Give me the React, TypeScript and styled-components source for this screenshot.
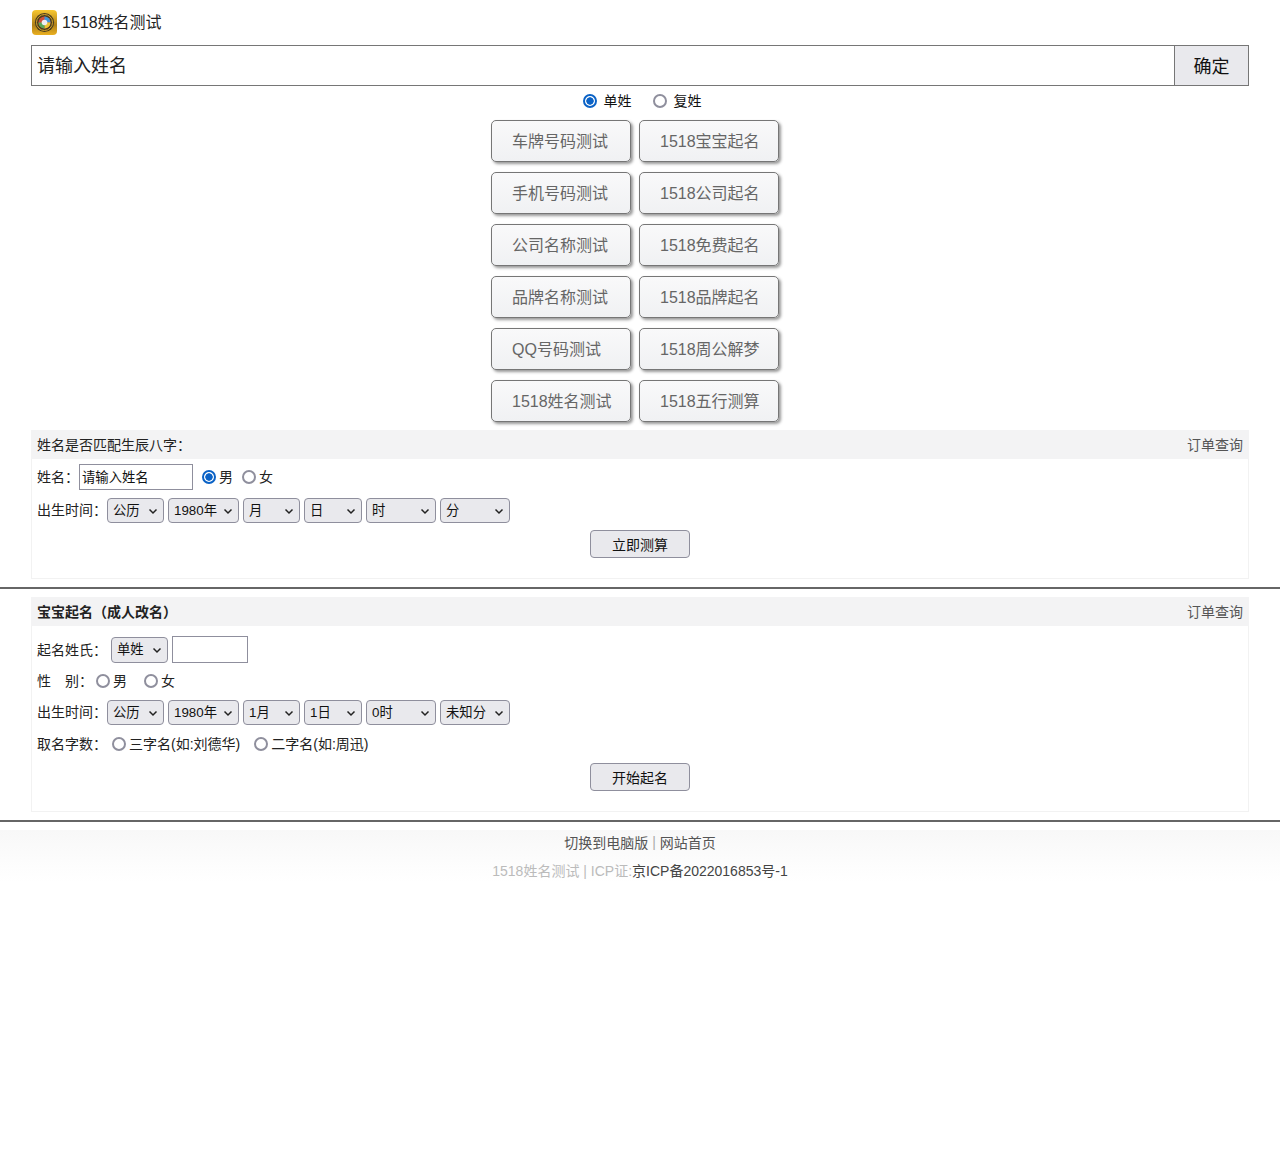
import React from "react";
import styled, { createGlobalStyle } from "styled-components";

const FONT = `"Liberation Sans", "Noto Sans CJK SC", sans-serif`;

const Global = createGlobalStyle`
  html, body { margin: 0; padding: 0; background: #fff; }
  body { font-family: ${FONT}; font-size: 14px; color: #111; }
  * { box-sizing: border-box; }
`;

const Page = styled.div`
  width: 1280px;
  min-height: 1167px;
  background: #fff;
`;
const Band = styled.div`
  padding: 0 31px;
`;
const Brand = styled.div`
  display: flex;
  align-items: center;
  gap: 5px;
  height: 45px;
  padding: 0 0 0 1px;
  font-size: 16px;
  color: #222;
`;
const BrandName = styled.span`
  padding-bottom: 4px;
`;
const SearchRow = styled.div`
  display: flex;
  height: 41px;
`;
const SearchInput = styled.input`
  flex: 1;
  min-width: 0;
  height: 41px;
  border: 1px solid #767676;
  border-right: 0;
  padding: 2px 5px 0 5px;
  font: 18px ${FONT};
  color: #222;
  outline: 0;
  &::placeholder { color: #222; opacity: 1; }
`;
const SearchButton = styled.button`
  width: 75px;
  height: 41px;
  border: 1px solid #767676;
  background: #e9e9ed;
  padding: 0 0 2px;
  font: 18px ${FONT};
  color: #111;
`;
const SurnameRow = styled.div`
  display: flex;
  justify-content: center;
  align-items: center;
  height: 29px;
  padding-left: 4px;
  font-size: 14px;
  color: #111;
  gap: 21px;
`;
const Option = styled.label<{ $gap?: number }>`
  display: inline-flex;
  align-items: center;
  gap: ${(p) => p.$gap ?? 3}px;
  padding-bottom: 2px;
`;
const Radio = styled.input.attrs({ type: "radio" })`
  appearance: none;
  width: 14px;
  height: 14px;
  margin: 2px 0 0;
  border-radius: 50%;
  border: 2px solid #8f8f9d;
  background: #fff;
  &:checked {
    border: 2px solid #0a62c6;
    background: radial-gradient(circle, #0a62c6 0 3.4px, #fff 4px);
  }
`;
const Grid = styled.div`
  display: grid;
  grid-template-columns: 140px 140px;
  gap: 10px 8px;
  justify-content: center;
  margin: 5px 0 8px;
  padding-right: 10px;
`;
const LinkButton = styled.button`
  height: 42px;
  width: 140px;
  border: 1px solid #767676;
  border-radius: 5px;
  background: linear-gradient(#f9f9fa, #f0f1f3);
  box-shadow: 2px 2px 3px #999;
  padding: 0 0 2px 20px;
  text-align: left;
  font: 16px ${FONT};
  color: #666;
`;
const Card = styled.section<{ $height: number }>`
  height: ${(p) => p.$height}px;
  border: 1px solid #f2f2f2;
  border-top: 0;
  display: flex;
  flex-direction: column;
`;
const CardTitle = styled.div<{ $bold?: boolean }>`
  display: flex;
  justify-content: space-between;
  align-items: center;
  height: 29px;
  background: #f3f3f4;
  margin: 0 -1px;
  padding: 0 6px 2px;
  font-size: 14px;
  font-weight: ${(p) => (p.$bold ? 700 : 400)};
  color: #222;
`;
const OrderLink = styled.span`
  font-weight: 400;
  color: #555;
`;
const Row = styled.div<{ $h: number }>`
  display: flex;
  align-items: center;
  height: ${(p) => p.$h}px;
  padding-left: 5px;
  gap: 4px;
  color: #222;
`;
const Options = styled.div<{ $gap: number; $left?: number }>`
  display: flex;
  align-items: center;
  gap: ${(p) => p.$gap}px;
  margin-left: ${(p) => p.$left ?? 0}px;
`;
const Label = styled.span<{ $w: number; $lift?: number }>`
  width: ${(p) => p.$w}px;
  flex: none;
  white-space: pre;
  padding-bottom: ${(p) => p.$lift ?? 2}px;
`;
const TextBox = styled.input<{ $w: number; $h: number }>`
  width: ${(p) => p.$w}px;
  height: ${(p) => p.$h}px;
  flex: none;
  border: 1px solid #8f8f9d;
  padding: 0 2px 1px;
  font: 13.33px ${FONT};
  color: #111;
  outline: 0;
  &::placeholder { color: #111; opacity: 1; }
`;
const SelectWrap = styled.span<{ $w: number; $h: number }>`
  position: relative;
  display: inline-block;
  flex: none;
  width: ${(p) => p.$w}px;
  height: ${(p) => p.$h}px;
`;
const NativeSelect = styled.select`
  appearance: none;
  width: 100%;
  height: 100%;
  border: 1px solid #8f8f9d;
  border-radius: 4px;
  background: #e9e9ed;
  padding: 0 0 0 5px;
  font: 13.33px ${FONT};
  color: #111;
  outline: 0;
`;
const Chevron = styled.svg`
  position: absolute;
  right: 6px;
  top: calc(50% - 5px);
  width: 10px;
  height: 10px;
  pointer-events: none;
`;
const Center = styled.div<{ $top: number }>`
  display: flex;
  justify-content: center;
  margin-top: ${(p) => p.$top}px;
`;
const Submit = styled.button`
  width: 100px;
  height: 28px;
  border: 1px solid #8f8f9d;
  border-radius: 4px;
  background: #e9e9ed;
  padding: 0;
  font: 14px ${FONT};
  color: #111;
`;
const Rule = styled.hr`
  height: 2px;
  border: 0;
  margin: 8px 0;
  background: #666;
`;
const Footer = styled.footer`
  height: 52px;
  background: linear-gradient(#f8f8f8, #fff);
  display: flex;
  flex-direction: column;
  align-items: center;
  font-size: 14px;
`;
const FooterLine = styled.div<{ $h: number; $top?: number; $muted?: boolean }>`
  height: ${(p) => p.$h}px;
  padding-top: ${(p) => p.$top ?? 0}px;
  display: flex;
  align-items: center;
  color: ${(p) => (p.$muted ? "#bbb" : "#555")};
  white-space: pre;
`;
const Sep = styled.span`
  color: #aaa;
`;
const Dark = styled.span`
  color: #444;
`;

const Logo = () => (
  <svg width="25" height="25" viewBox="0 0 25 25" aria-hidden="true">
    <defs>
      <linearGradient id="lg" x1="0" y1="0" x2="0" y2="1">
        <stop offset="0" stopColor="#f8c830" />
        <stop offset="0.6" stopColor="#b08018" />
        <stop offset="1" stopColor="#eab020" />
      </linearGradient>
    </defs>
    <rect width="25" height="25" rx="4" fill="url(#lg)" />
    <circle cx="12.5" cy="12.5" r="9.6" fill="#4a3c1c" />
    <circle cx="12.5" cy="12.5" r="8" fill="none" stroke="#d9a52a" strokeWidth="1" />
    <circle cx="12.5" cy="12.5" r="6" fill="#d0503a" />
    <path d="M12.5 6.5a6 6 0 0 1 6 6h-6z" fill="#3f94d6" />
    <path d="M18.5 12.5a6 6 0 0 1-6 6v-6z" fill="#ecc533" />
    <path d="M12.5 18.5a6 6 0 0 1-6-6h6z" fill="#58a858" />
    <circle cx="12.5" cy="12.5" r="2.8" fill="#eeeef2" />
  </svg>
);

const Select = ({ w, h = 25, value }: { w: number; h?: number; value: string }) => (
  <SelectWrap $w={w} $h={h}>
    <NativeSelect defaultValue={value}>
      <option>{value}</option>
    </NativeSelect>
    <Chevron viewBox="0 0 10 10">
      <path d="M1.5 3.5 5 7 8.5 3.5" fill="none" stroke="#222" strokeWidth="1.5" />
    </Chevron>
  </SelectWrap>
);

const links = [
  ["车牌号码测试", "1518宝宝起名"],
  ["手机号码测试", "1518公司起名"],
  ["公司名称测试", "1518免费起名"],
  ["品牌名称测试", "1518品牌起名"],
  ["QQ号码测试", "1518周公解梦"],
  ["1518姓名测试", "1518五行测算"],
];
const widths = [57, 71, 57, 58, 70, 70];
const COLON = "\uFF1A";

export default function App() {
  return (
    <Page>
      <Global />
      <Band>
        <Brand>
          <Logo />
          <BrandName>1518姓名测试</BrandName>
        </Brand>
        <SearchRow>
          <SearchInput placeholder="请输入姓名" />
          <SearchButton>确定</SearchButton>
        </SearchRow>
        <SurnameRow>
          <Option $gap={7}>
            <Radio name="s" defaultChecked />
            单姓
          </Option>
          <Option $gap={7}>
            <Radio name="s" />
            复姓
          </Option>
        </SurnameRow>
        <Grid>
          {links.flat().map((t) => (
            <LinkButton key={t}>{t}</LinkButton>
          ))}
        </Grid>
        <Card $height={149}>
          <CardTitle>
            <span>{"姓名是否匹配生辰八字" + COLON}</span>
            <OrderLink>订单查询</OrderLink>
          </CardTitle>
          <Row $h={36}>
            <Label $w={38}>{"姓名" + COLON}</Label>
            <TextBox $w={114} $h={26} defaultValue="请输入姓名" />
            <Options $gap={9} $left={5}>
              <Option>
                <Radio name="g1" defaultChecked />男
              </Option>
              <Option>
                <Radio name="g1" />女
              </Option>
            </Options>
          </Row>
          <Row $h={31}>
            <Label $w={66} $lift={4}>{"出生时间" + COLON}</Label>
            {["公历", "1980年", "月", "日", "时", "分"].map((v, i) => (
              <Select key={v} w={widths[i]} value={v} />
            ))}
          </Row>
          <Center $top={4}>
            <Submit>立即测算</Submit>
          </Center>
        </Card>
      </Band>
      <Rule />
      <Band>
        <Card $height={215}>
          <CardTitle $bold>
            <span>{"宝宝起名\uFF08成人改名\uFF09"}</span>
            <OrderLink>订单查询</OrderLink>
          </CardTitle>
          <Row $h={47}>
            <Label $w={70}>{"起名姓氏" + COLON}</Label>
            <Select w={57} h={26} value="单姓" />
            <TextBox $w={76} $h={27} />
          </Row>
          <Row $h={16}>
            <Label $w={55}>{"性\u3000别" + COLON}</Label>
            <Options $gap={17}>
              <Option>
                <Radio name="g2" />男
              </Option>
              <Option>
                <Radio name="g2" />女
              </Option>
            </Options>
          </Row>
          <Row $h={47}>
            <Label $w={66} $lift={4}>{"出生时间" + COLON}</Label>
            {["公历", "1980年", "1月", "1日", "0时", "未知分"].map((v, i) => (
              <Select key={v} w={widths[i]} value={v} />
            ))}
          </Row>
          <Row $h={16}>
            <Label $w={71}>{"取名字数" + COLON}</Label>
            <Options $gap={14}>
              <Option>
                <Radio name="n" />三字名(如:刘德华)
              </Option>
              <Option>
                <Radio name="n" />二字名(如:周迅)
              </Option>
            </Options>
          </Row>
          <Center $top={11}>
            <Submit>开始起名</Submit>
          </Center>
        </Card>
      </Band>
      <Rule />
      <Footer>
        <FooterLine $h={26}>
          切换到电脑版 <Sep>|</Sep> 网站首页
        </FooterLine>
        <FooterLine $h={30} $top={4} $muted>
          1518姓名测试 | ICP证:<Dark>京ICP备2022016853号-1</Dark>
        </FooterLine>
      </Footer>
    </Page>
  );
}
